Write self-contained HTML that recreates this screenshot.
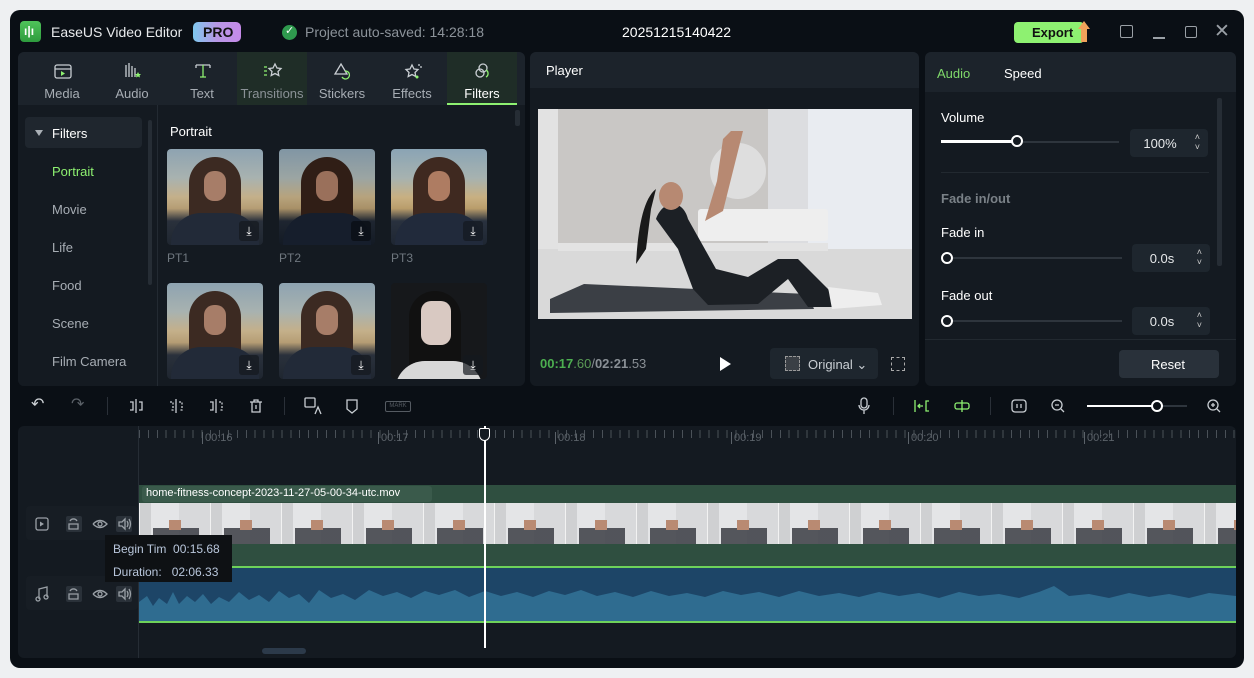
<!DOCTYPE html>
<html><head><meta charset="utf-8"><style>
*{box-sizing:border-box;margin:0;padding:0}
body{width:1254px;height:678px;background:#eef0f2;font-family:"Liberation Sans",sans-serif;position:relative;overflow:hidden;color:#e6e8ea}
.win{position:absolute;left:10px;top:10px;width:1234px;height:658px;background:#0a0f15;border-radius:10px;overflow:hidden}
.a{position:absolute}
.t{position:absolute;white-space:nowrap}
.panel{position:absolute;background:#141a21;border-radius:6px;overflow:hidden}
.tab{position:absolute;top:0;width:70px;height:53px;text-align:center;font-size:13px;color:#a7adb4}
.tab span{position:absolute;left:0;right:0;top:34px}
.tab svg{position:absolute;left:26px;top:10px}
.side{position:absolute;left:34px;font-size:13px;color:#a7adb4}
.thumb{position:absolute;width:96px;height:96px;border-radius:4px;overflow:hidden;background:linear-gradient(180deg,#8ea3b1 0%,#a8b2b0 30%,#c4b08a 50%,#b59d74 62%,#2a313c 75%,#1f2630 100%)}
.thumb .hair{position:absolute;left:22px;top:8px;width:52px;height:84px;border-radius:26px 26px 8px 8px;background:#3c2a22}
.thumb .face{position:absolute;left:37px;top:22px;width:22px;height:30px;border-radius:10px;background:#a77d68}
.thumb .body{position:absolute;left:4px;top:64px;width:88px;height:40px;border-radius:30px 30px 0 0;background:#222a38}
.dl{position:absolute;right:4px;bottom:4px;width:20px;height:20px;border-radius:3px;background:rgba(20,24,30,.7);color:#fff;font-size:12px;text-align:center;line-height:20px}
.lbl{position:absolute;font-size:12px;color:#6f777f}
.spin{position:absolute;width:78px;height:28px;background:#1e262e;border-radius:4px;font-size:13px;color:#e6e8ea}
.spin b{font-weight:normal;position:absolute;left:0;width:60px;text-align:center;top:7px}
.spin i{position:absolute;right:8px;top:3px;font-style:normal;font-size:9px;line-height:10px;color:#ccc}
.ico{position:absolute;stroke:#c9ced3;fill:none;stroke-width:1.3}
</style></head><body>
<div class="win">
 <div class="a" style="left:10px;top:11px;width:21px;height:21px;border-radius:4px;background:linear-gradient(#4fc35a,#2e9b3e)"></div>
 <div class="t" style="left:14px;top:14px;font-size:12px;font-weight:bold;color:#fff">ı|ı</div>
 <div class="t" style="left:41px;top:14px;font-size:14px;color:#e8eaec">EaseUS Video Editor</div>
 <div class="a" style="left:183px;top:12px;width:48px;height:20px;border-radius:5px;background:linear-gradient(90deg,#7fc8ef,#b897e6,#c58ae8)"></div>
 <div class="t" style="left:193px;top:14px;font-size:14px;font-weight:bold;color:#111">PRO</div>
 <div class="a" style="left:272px;top:15px;width:15px;height:15px;border-radius:50%;background:#2f9a4e"></div>
 <div class="t" style="left:275px;top:14px;font-size:11px;color:#fff">✓</div>
 <div class="t" style="left:295px;top:14px;font-size:14px;color:#8c939a">Project auto-saved: 14:28:18</div>
 <div class="t" style="left:612px;top:14px;font-size:14px;color:#fff">20251215140422</div>
 <div class="a" style="left:1004px;top:12px;width:70px;height:21px;border-radius:4px;background:#8ef171"></div>
 <div class="t" style="left:1022px;top:15px;font-size:13px;font-weight:bold;color:#111">Export</div>
 <div class="a" style="left:1068px;top:11px;width:0;height:0;border-left:6px solid transparent;border-right:6px solid transparent;border-bottom:8px solid #f0a25a"></div>
 <div class="a" style="left:1071px;top:18px;width:6px;height:14px;background:#f0a25a"></div>
 <div class="a" style="left:1110px;top:15px;width:13px;height:13px;border:1.3px solid #9aa0a6;border-radius:2px"></div>
 <div class="a" style="left:1143px;top:27px;width:12px;height:1.5px;background:#9aa0a6"></div>
 <div class="a" style="left:1175px;top:16px;width:12px;height:12px;border:1.5px solid #9aa0a6;border-radius:2px"></div>
 <div class="t" style="left:1204px;top:10px;font-size:19px;color:#9aa0a6">✕</div>

 <div class="panel" style="left:8px;top:42px;width:507px;height:334px">
  <div class="a" style="left:0;top:0;width:507px;height:53px;background:#1c232b"></div>
  <div class="a" style="left:219px;top:0;width:70px;height:53px;background:#1f2d27"></div>
  <div class="a" style="left:429px;top:0;width:70px;height:53px;background:#1f2d27"></div>
  <div class="a" style="left:429px;top:51px;width:70px;height:2px;background:#8ef171"></div>
  <div class="tab" style="left:9px"><svg width="20" height="18" class="ico"><rect x="2" y="3" width="16" height="13" rx="2"/><line x1="2" y1="7" x2="18" y2="7"/><path d="M8 9l4 2.5-4 2.5z" fill="#8ef171" stroke="none"/></svg><span>Media</span></div>
  <div class="tab" style="left:79px"><svg width="20" height="18" class="ico"><path d="M3 3v12M6 1v14M9 4v11M12 6v9"/><path d="M15 10l1 2 2 0-1.5 1.5.5 2-2-1-2 1 .5-2L12 12h2z" fill="#8ef171" stroke="none"/></svg><span>Audio</span></div>
  <div class="tab" style="left:149px"><svg width="20" height="18" class="ico"><path d="M3 3h14M3 3v3M17 3v3"/><path d="M10 3v12M7 15h6" stroke="#8ef171"/></svg><span>Text</span></div>
  <div class="tab" style="left:219px;color:#8a9196"><svg width="20" height="18" class="ico"><path d="M12 2l2 4 4 .5-3 3 .8 4-3.8-2-3.8 2 .8-4-3-3 4-.5z"/><path d="M1 5h3M1 9h3M1 13h3" stroke="#8ef171"/></svg><span>Transitions</span></div>
  <div class="tab" style="left:289px"><svg width="20" height="18" class="ico"><path d="M8 2l6 10H2z"/><path d="M12 9a4 4 0 1 1-3 6" stroke="#8ef171"/></svg><span>Stickers</span></div>
  <div class="tab" style="left:359px"><svg width="20" height="18" class="ico"><path d="M9 3l2 4 4 .5-3 3 .8 4-3.8-2-3.8 2 .8-4-3-3 4-.5z"/><circle cx="14" cy="15" r="1.5" fill="#8ef171" stroke="none"/><path d="M16 2v2M17 5h2"/></svg><span>Effects</span></div>
  <div class="tab" style="left:429px;color:#fff"><svg width="20" height="18" class="ico"><circle cx="10" cy="6" r="4"/><circle cx="7" cy="11" r="4"/><path d="M13 8a4 4 0 0 1 0 7" stroke="#8ef171"/></svg><span>Filters</span></div>
  <div class="a" style="left:0;top:53px;width:140px;height:281px;background:#141a21;border-right:1px solid #232a32"></div>
  <div class="a" style="left:7px;top:65px;width:117px;height:31px;background:#1f262e;border-radius:4px"></div>
  <div class="a" style="left:17px;top:78px;border-left:4px solid transparent;border-right:4px solid transparent;border-top:6px solid #aab0b6"></div>
  <div class="t" style="left:34px;top:74px;font-size:13px;color:#fff">Filters</div>
  <div class="a" style="left:130px;top:68px;width:4px;height:165px;background:#262d35;border-radius:2px"></div>
  <div class="side" style="top:112px;color:#8ef171">Portrait</div>
  <div class="side" style="top:150px">Movie</div>
  <div class="side" style="top:188px">Life</div>
  <div class="side" style="top:226px">Food</div>
  <div class="side" style="top:264px">Scene</div>
  <div class="side" style="top:302px">Film Camera</div>
  <div class="t" style="left:152px;top:72px;font-size:13px;color:#fff">Portrait</div>
  <div class="a" style="left:497px;top:58px;width:5px;height:16px;background:#262d35;border-radius:2px"></div>
  <div class="thumb" style="left:149px;top:97px"><div class="hair"></div><div class="face"></div><div class="body"></div><div class="dl">⤓</div></div>
  <div class="thumb" style="left:261px;top:97px;filter:contrast(1.1) brightness(.9)"><div class="hair"></div><div class="face"></div><div class="body"></div><div class="dl">⤓</div></div>
  <div class="thumb" style="left:373px;top:97px;filter:saturate(1.2)"><div class="hair"></div><div class="face"></div><div class="body"></div><div class="dl">⤓</div></div>
  <div class="lbl" style="left:149px;top:199px">PT1</div>
  <div class="lbl" style="left:261px;top:199px">PT2</div>
  <div class="lbl" style="left:373px;top:199px">PT3</div>
  <div class="thumb" style="left:149px;top:231px"><div class="hair"></div><div class="face"></div><div class="body"></div><div class="dl">⤓</div></div>
  <div class="thumb" style="left:261px;top:231px"><div class="hair"></div><div class="face"></div><div class="body"></div><div class="dl">⤓</div></div>
  <div class="thumb" style="left:373px;top:231px;background:#16181b"><div class="hair" style="background:#111;left:18px"></div><div class="face" style="background:#d9c9c2;left:30px;top:18px;width:30px;height:44px"></div><div class="body" style="background:#d8d8d8;top:78px"></div><div class="dl">⤓</div></div>
 </div>

 <div class="panel" style="left:520px;top:42px;width:389px;height:334px">
  <div class="a" style="left:0;top:0;width:389px;height:36px;background:#1c232b"></div>
  <div class="t" style="left:16px;top:11px;font-size:13px;color:#fff">Player</div>
  <svg class="a" style="left:8px;top:57px" width="374" height="210" viewBox="0 0 374 210">
   <rect width="374" height="210" fill="#c9c7c5"/>
   <rect x="0" width="20" height="210" fill="#e2e2e2"/>
   <rect x="262" y="0" width="112" height="150" fill="#e9ecf1"/>
   <rect x="230" y="0" width="40" height="150" fill="#dcdde0"/>
   <rect x="0" y="140" width="374" height="70" fill="#d9d9d9"/>
   <rect x="20" y="134" width="270" height="8" fill="#e3e3e3"/>
   <rect x="160" y="100" width="130" height="32" rx="3" fill="#eeeeee"/>
   <circle cx="200" cy="62" r="28" fill="#dedede"/>
   <path d="M12 190L46 175L270 185L276 200L12 204Z" fill="#3b3f45"/>
   <path d="M118 110C125 90 145 90 150 110L178 160L210 168 240 150 260 150 290 180 300 198 270 198 250 170 220 195 170 196 155 180 140 140Z" fill="#1c2025"/>
   <path d="M185 30l8-8 12 0-20 80-18 10 12-40z" fill="#b78972"/>
   <ellipse cx="133" cy="87" rx="12" ry="14" fill="#b78972"/>
   <path d="M118 80C105 90 100 120 98 155L108 140 113 100Z" fill="#1a1a1a"/>
   <path d="M290 178l50 6 4 12-50 4z" fill="#eeeeee"/>
  </svg>
  <div class="t" style="left:10px;top:304px;font-size:13px;color:#5a9a55"><b style="color:#4caf50">00:17</b>.60<span style="color:#8a9096">/<b>02:21</b>.53</span></div>
  <div class="a" style="left:190px;top:305px;border-top:7px solid transparent;border-bottom:7px solid transparent;border-left:11px solid #fff"></div>
  <div class="a" style="left:240px;top:296px;width:108px;height:31px;background:#1e262e;border-radius:4px"></div>
  <div class="a" style="left:255px;top:304px;width:15px;height:15px;border:1px dashed #999;background:#3a3f45"></div>
  <div class="t" style="left:278px;top:305px;font-size:13px;color:#c9ced3">Original ⌄</div>
  <div class="a" style="left:361px;top:305px;width:14px;height:14px;border:1.3px dashed #aaa"></div>
 </div>

 <div class="panel" style="left:915px;top:42px;width:311px;height:334px">
  <div class="a" style="left:0;top:0;width:311px;height:40px;background:#1c232b"></div>
  <div class="t" style="left:12px;top:14px;font-size:13px;color:#7fd86a">Audio</div>
  <div class="t" style="left:79px;top:14px;font-size:13px;color:#fff">Speed</div>
  <div class="a" style="left:292px;top:46px;width:5px;height:168px;background:#262d35;border-radius:2px"></div>
  <div class="t" style="left:16px;top:58px;font-size:13px;color:#fff">Volume</div>
  <div class="a" style="left:16px;top:89px;width:178px;height:2px;background:#2e353d"></div>
  <div class="a" style="left:16px;top:88px;width:76px;height:3px;background:#fff"></div>
  <div class="a" style="left:86px;top:83px;width:12px;height:12px;border-radius:50%;border:2px solid #fff;background:#141a21"></div>
  <div class="spin" style="left:205px;top:77px"><b>100%</b><i>˄<br>˅</i></div>
  <div class="a" style="left:16px;top:120px;width:268px;height:1px;background:#222930"></div>
  <div class="t" style="left:16px;top:139px;font-size:13px;font-weight:bold;color:#7a8187">Fade in/out</div>
  <div class="t" style="left:16px;top:173px;font-size:13px;color:#fff">Fade in</div>
  <div class="a" style="left:16px;top:205px;width:181px;height:2px;background:#2e353d"></div>
  <div class="a" style="left:16px;top:200px;width:12px;height:12px;border-radius:50%;border:2px solid #fff;background:#141a21"></div>
  <div class="spin" style="left:207px;top:192px"><b>0.0s</b><i>˄<br>˅</i></div>
  <div class="t" style="left:16px;top:236px;font-size:13px;color:#fff">Fade out</div>
  <div class="a" style="left:16px;top:268px;width:181px;height:2px;background:#2e353d"></div>
  <div class="a" style="left:16px;top:263px;width:12px;height:12px;border-radius:50%;border:2px solid #fff;background:#141a21"></div>
  <div class="spin" style="left:207px;top:255px"><b>0.0s</b><i>˄<br>˅</i></div>
  <div class="a" style="left:0;top:287px;width:311px;height:1px;background:#222930"></div>
  <div class="a" style="left:194px;top:298px;width:100px;height:28px;background:#29313a;border-radius:4px"></div>
  <div class="t" style="left:226px;top:305px;font-size:13px;color:#fff">Reset</div>
 </div>

 <div class="t" style="left:21px;top:384px;font-size:16px;color:#d0d4d8">↶</div>
 <div class="t" style="left:61px;top:384px;font-size:16px;color:#5b6168">↷</div>
 <div class="a" style="left:97px;top:387px;width:1px;height:18px;background:#2a3038"></div>
 <svg class="ico a" style="left:117px;top:388px" width="18" height="16"><path d="M3 4h3v8H3M12 4h3v8h-3"/><path d="M9 1v14"/></svg>
 <svg class="ico a" style="left:157px;top:388px" width="18" height="16"><path d="M3 4h3v8H3M12 4h3v8h-3" stroke-dasharray="2 1.5"/><path d="M9 1v14"/></svg>
 <svg class="ico a" style="left:197px;top:388px" width="18" height="16"><path d="M3 4h3v8H3"/><path d="M12 4h3v8h-3" stroke-dasharray="2 1.5"/><path d="M9 1v14"/></svg>
 <svg class="ico a" style="left:238px;top:388px" width="16" height="16"><path d="M2 4h12M6 4V2h4v2M4 4v10h8V4M8 7v4"/></svg>
 <div class="a" style="left:274px;top:387px;width:1px;height:18px;background:#2a3038"></div>
 <svg class="ico a" style="left:294px;top:387px" width="18" height="18"><rect x="1" y="1" width="10" height="9" rx="1"/><path d="M11 17l3-7 3 7"/></svg>
 <svg class="ico a" style="left:335px;top:388px" width="14" height="16"><path d="M2 2h10v9l-5 4-5-4z"/></svg>
 <div class="a" style="left:375px;top:391px;width:26px;height:11px;border:1px solid #555b62;border-radius:2px;font-size:6px;color:#555b62;text-align:center;line-height:9px">MARK</div>
 <svg class="ico a" style="left:847px;top:387px" width="14" height="18"><rect x="4" y="1" width="6" height="10" rx="3"/><path d="M2 8a5 5 0 0 0 10 0M7 13v4"/></svg>
 <div class="a" style="left:883px;top:387px;width:1px;height:18px;background:#2a3038"></div>
 <svg class="ico a" style="left:903px;top:389px;stroke:#8ef171" width="18" height="14"><path d="M2 1v12M6 7h4M7 5l-2 2 2 2M16 2h-3v10h3"/></svg>
 <svg class="ico a" style="left:943px;top:387px;stroke:#8ef171" width="18" height="18"><rect x="2" y="6" width="14" height="6" rx="2"/><path d="M9 3v12"/></svg>
 <div class="a" style="left:980px;top:387px;width:1px;height:18px;background:#2a3038"></div>
 <svg class="ico a" style="left:1001px;top:389px" width="16" height="14"><rect x="1" y="1" width="14" height="12" rx="3"/><path d="M6 5v4M10 5v4"/></svg>
 <svg class="ico a" style="left:1041px;top:389px" width="14" height="14"><circle cx="6" cy="6" r="5"/><path d="M4 6h4M10 10l3 3"/></svg>
 <div class="a" style="left:1077px;top:395px;width:100px;height:2px;background:#2e353d"></div>
 <div class="a" style="left:1077px;top:395px;width:70px;height:2px;background:#fff"></div>
 <div class="a" style="left:1141px;top:390px;width:12px;height:12px;border-radius:50%;border:2px solid #fff;background:#0a0f15"></div>
 <svg class="ico a" style="left:1197px;top:389px" width="14" height="14"><circle cx="6" cy="6" r="5"/><path d="M4 6h4M6 4v4M10 10l3 3"/></svg>

 <div class="a" style="left:8px;top:416px;width:1218px;height:232px;background:#141a21;border-radius:6px;overflow:hidden">
  <div class="a" style="left:120px;top:0;width:1px;height:232px;background:#262d35"></div>
  <div class="a" style="left:121px;top:0;width:1097px;height:14px;background:repeating-linear-gradient(90deg,#4a5158 0 1px,transparent 1px 8.9px);clip-path:inset(4px 0 2px 0)"></div>
  <div class="t" style="left:184px;top:6px;font-size:11px;color:#5c636a;border-left:1px solid #5c636a;padding-left:2px">00:16</div>
  <div class="t" style="left:360px;top:6px;font-size:11px;color:#5c636a;border-left:1px solid #5c636a;padding-left:2px">00:17</div>
  <div class="t" style="left:537px;top:6px;font-size:11px;color:#5c636a;border-left:1px solid #5c636a;padding-left:2px">00:18</div>
  <div class="t" style="left:713px;top:6px;font-size:11px;color:#5c636a;border-left:1px solid #5c636a;padding-left:2px">00:19</div>
  <div class="t" style="left:890px;top:6px;font-size:11px;color:#5c636a;border-left:1px solid #5c636a;padding-left:2px">00:20</div>
  <div class="t" style="left:1066px;top:6px;font-size:11px;color:#5c636a;border-left:1px solid #5c636a;padding-left:2px">00:21</div>
  <div class="a" style="left:8px;top:80px;width:112px;height:34px;background:#171d24;border-radius:4px"></div>
  <div class="a" style="left:8px;top:150px;width:112px;height:34px;background:#171d24;border-radius:4px"></div>
  <svg class="ico a" style="left:17px;top:90px;stroke:#9aa0a6" width="100" height="16"><rect x="1" y="2" width="12" height="12" rx="2"/><path d="M5 5.5l4 2.5-4 2.5z" fill="#9aa0a6" stroke="none"/><rect x="31" y="0" width="16" height="16" rx="2" fill="#2a3139" stroke="none"/><path d="M35 5a4 4 0 0 1 7 0M34 8h9v5h-9z"/><circle cx="65" cy="8" r="2"/><path d="M58 8q7-7 14 0q-7 7-14 0"/><rect x="81" y="0" width="16" height="16" rx="2" fill="#2a3139" stroke="none"/><path d="M84 6h3l3-3v10l-3-3h-3zM92 5q2 3 0 6M94 3q3 5 0 10"/></svg>
  <svg class="ico a" style="left:17px;top:160px;stroke:#9aa0a6" width="100" height="16"><path d="M4 13V3l8-2v10"/><circle cx="3" cy="13" r="2"/><circle cx="11" cy="11" r="2"/><rect x="31" y="0" width="16" height="16" rx="2" fill="#2a3139" stroke="none"/><path d="M35 5a4 4 0 0 1 7 0M34 8h9v5h-9z"/><circle cx="65" cy="8" r="2"/><path d="M58 8q7-7 14 0q-7 7-14 0"/><rect x="81" y="0" width="16" height="16" rx="2" fill="#2a3139" stroke="none"/><path d="M84 6h3l3-3v10l-3-3h-3zM92 5q2 3 0 6M94 3q3 5 0 10"/></svg>
  <div class="a" style="left:121px;top:59px;width:1097px;height:81px;background:#2f4f40"></div>
  <div class="a" style="left:124px;top:60px;width:290px;height:16px;background:#3a5a4b;border-radius:3px"></div>
  <div class="t" style="left:128px;top:61px;font-size:11px;color:#fff">home-fitness-concept-2023-11-27-05-00-34-utc.mov</div>
  <div class="a" style="left:121px;top:77px;width:1097px;height:41px;background:repeating-linear-gradient(90deg,#f2f2f2 0 1px,#cfd0d2 1px 12px,#e4e5e7 12px 40px,#d8d9db 40px 71px);"></div>
  <div class="a" style="left:121px;top:102px;width:1097px;height:16px;background:repeating-linear-gradient(90deg,transparent 0 14px,#3a3d44 14px 60px,transparent 60px 71px);opacity:.85"></div>
  <div class="a" style="left:121px;top:94px;width:1097px;height:10px;background:repeating-linear-gradient(90deg,transparent 0 30px,#b98a72 30px 42px,transparent 42px 71px)"></div>
  <div class="a" style="left:121px;top:140px;width:1097px;height:2px;background:#6ed25a"></div>
  <div class="a" style="left:121px;top:142px;width:1097px;height:53px;background:#1d4567"></div>
  <svg class="a" style="left:121px;top:142px" width="1097" height="53" viewBox="0 0 1097 53"><path transform="translate(0,10)" fill="#2f6c90" d="M0 53V24L8 18 14 28 20 20 28 26 34 14 40 26 48 18 56 24 64 16 72 26 80 19 90 24 100 14 110 22 120 17 130 24 140 13 150 20 160 16 170 25 180 12 192 20 204 16 216 22 230 12 244 18 258 14 272 20 286 13 300 17 316 12 330 19 346 13 362 18 378 14 394 19 410 13 426 17 442 12 458 18 476 14 494 19 512 13 530 18 548 15 566 19 584 13 602 17 620 14 640 19 660 13 680 18 700 15 720 19 740 14 760 18 780 15 800 20 820 14 840 18 860 16 880 20 900 14 915 8 930 18 950 16 970 20 990 15 1010 19 1030 16 1050 20 1070 15 1097 18V53Z"/></svg>
  <div class="a" style="left:121px;top:195px;width:1097px;height:2px;background:#6ed25a"></div>
  <div class="a" style="left:244px;top:222px;width:44px;height:6px;background:#2c3a4a;border-radius:3px"></div>
  <div class="a" style="left:466px;top:0;width:1.5px;height:222px;background:#fff"></div>
  <div class="a" style="left:461px;top:2px;width:11px;height:13px;border:1.5px solid #fff;border-radius:2px 2px 6px 6px;background:#141a21"></div>
  <div class="a" style="left:87px;top:109px;width:127px;height:47px;background:#0e1114"></div>
  <div class="t" style="left:95px;top:116px;font-size:12px;color:#b9c7dc">Begin Tim&nbsp; 00:15.68</div>
  <div class="t" style="left:95px;top:139px;font-size:12px;color:#b9c7dc">Duration:&nbsp;&nbsp; 02:06.33</div>
 </div>
</div>
</body></html>
